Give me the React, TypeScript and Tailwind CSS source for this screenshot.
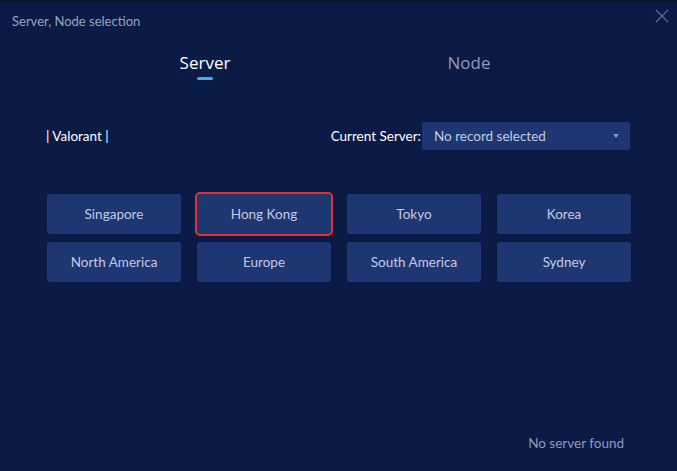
import React from "react";

const servers = [
  "Singapore",
  "Hong Kong",
  "Tokyo",
  "Korea",
  "North America",
  "Europe",
  "South America",
  "Sydney",
];

export default function App() {
  return (
    <div
      className="w-[677px] h-[471px] bg-[#0c1b46] flex flex-col overflow-hidden relative"
      style={{ fontFamily: "Lato, 'Noto Sans', sans-serif" }}
    >
      <div className="h-[2px] bg-[#0a1331]" />
      <div className="h-[40px] flex items-center pl-[12px] text-[13px] text-[#99a3c0]">
        Server, Node selection
      </div>
      <button className="absolute right-[8px] top-[9px] w-[14px] h-[14px]">
        <svg width="14" height="14" viewBox="0 0 14 14">
          <path d="M1 1 L13 13 M13 1 L1 13" stroke="#5e6a90" strokeWidth="1.3" />
        </svg>
      </button>
      <div className="flex h-[38px]">
        <div className="w-[410px] flex flex-col items-center pt-[9px]">
          <span className="text-[17px] leading-[24px] text-white" style={{ fontFamily: "'Open Sans', sans-serif" }}>Server</span>
          <span className="mt-[2px] w-[16px] h-[3px] rounded-full bg-[#33b4ea]" />
        </div>
        <div className="w-[118px] flex flex-col items-center pt-[9px]">
          <span className="text-[17px] leading-[24px] text-[#8e99bf]" style={{ fontFamily: "'Open Sans', sans-serif" }}>Node</span>
        </div>
      </div>
      <div className="flex items-center mt-[42px] pl-[46px] pr-[47px] h-[28px]">
        <span className="text-[13.5px] text-white">| Valorant |</span>
        <div className="flex-1" />
        <span className="text-[13.5px] text-white mr-[1px]">Current Server:</span>
        <div className="w-[208px] h-[28px] bg-[#1e3672] rounded-[3px] flex items-center pl-[12px] pr-[11px] text-[13.5px] text-[#c3cbe3]">
          <span className="flex-1">No record selected</span>
          <svg width="6" height="4" viewBox="0 0 6 4">
            <path d="M0 0 L6 0 L3 4 Z" fill="#8e99bf" />
          </svg>
        </div>
      </div>
      <div className="grid grid-cols-4 gap-x-[16px] gap-y-[8px] mt-[44px] pl-[47px] pr-[46px]">
        {servers.map((s) => (
          <div
            key={s}
            className={
              s === "Hong Kong"
                ? "h-[40px] bg-[#1e3672] rounded-[3px] flex items-center justify-center text-[13.5px] text-[#c3cbe3] outline-[2px] outline outline-[#e0322f] outline-offset-0"
                : "h-[40px] bg-[#1e3672] rounded-[3px] flex items-center justify-center text-[13.5px] text-[#c3cbe3]"
            }
          >
            {s}
          </div>
        ))}
      </div>
      <div className="flex-1" />
      <div className="flex justify-end pr-[53px] pb-[18px] text-[13.5px] text-[#8e99bf]">
        No server found
      </div>
    </div>
  );
}
